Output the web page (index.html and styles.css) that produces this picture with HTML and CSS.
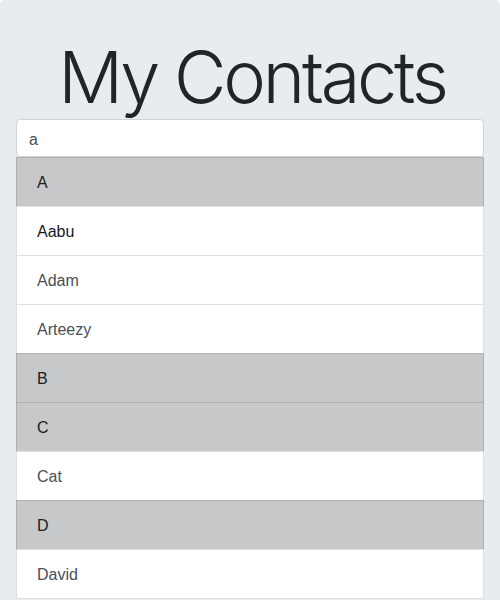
FILE: index.html
```html
<!DOCTYPE html>
<html>
<head>
<meta charset="utf-8">
<link rel="stylesheet" href="styles.css">
</head>
<body>
<div class="jumbotron">
  <h1 class="title">My Contacts</h1>
  <input class="search" type="text" value="a">
  <ul class="list">
    <li class="item header">A</li>
    <li class="item contact current">Aabu</li>
    <li class="item contact">Adam</li>
    <li class="item contact">Arteezy</li>
    <li class="item header">B</li>
    <li class="item header">C</li>
    <li class="item contact">Cat</li>
    <li class="item header">D</li>
    <li class="item contact">David</li>
  </ul>
</div>
</body>
</html>
```
FILE: styles.css
```css
html, body {
  margin: 0;
  padding: 0;
  background: #fff;
}
body {
  font-family: "Liberation Sans", Arial, sans-serif;
  font-size: 16px;
  line-height: 1.5;
  color: #212529;
}
.jumbotron {
  background: #e9ecef;
  border-radius: 4.8px;
  padding: 32px 16px;
  min-height: 600px;
  box-sizing: border-box;
}
.title {
  margin: 0 0 1px;
  font-family: Inter, sans-serif;
  font-weight: 300;
  font-size: 72px;
  line-height: 84px;
  letter-spacing: -3.2px;
  text-align: center;
  color: #212529;
  padding: 3px 0 0 4px;
  height: 86px;
  box-sizing: border-box;
}
.search {
  display: block;
  width: 100%;
  box-sizing: border-box;
  height: 38px;
  padding: 8px 12px 4px;
  font-family: "Liberation Sans", Arial, sans-serif;
  font-size: 16px;
  line-height: 1.5;
  color: #495057;
  background: #fff;
  border: 1px solid #ced4da;
  border-radius: 4px;
  outline: none;
  margin: 0;
}
.list {
  list-style: none;
  margin: 0;
  padding: 0;
  display: flex;
  flex-direction: column;
}
.item {
  padding: 13px 20px 11px;
  background: #fff;
  border: 1px solid rgba(0, 0, 0, 0.125);
  margin-bottom: -1px;
  color: #495057;
}
.item.header {
  background: #c6c8ca;
  color: #1b1e21;
}
.item.current {
  color: #16181b;
}
```
